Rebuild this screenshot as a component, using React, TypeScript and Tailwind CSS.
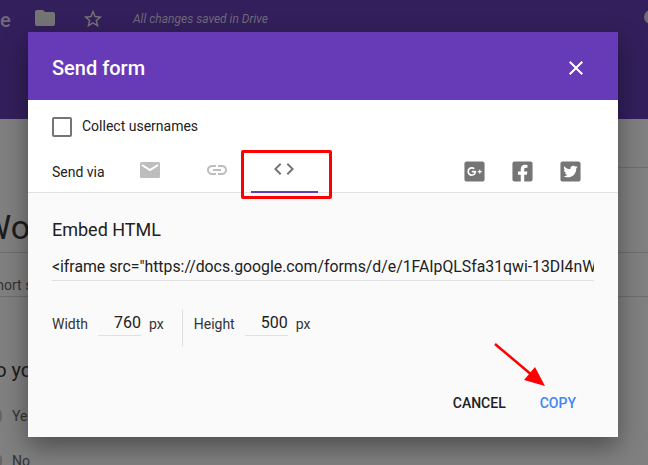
import { FaGooglePlusSquare, FaFacebookSquare, FaTwitterSquare } from 'react-icons/fa'

const socials = [FaGooglePlusSquare, FaFacebookSquare, FaTwitterSquare]

const Backdrop = () => (
  <div className="h-[465px] overflow-hidden bg-[#808080] text-[#1c1c1c]">
    <div className="flex h-[119px] items-start bg-[#331f5c] pt-[9px] text-[#6f6a78]">
      <span className="w-[35px] text-[20px] leading-[22px] font-medium">e</span>
      <svg viewBox="0 0 20 16" className="mt-[1px] h-4 w-5 fill-[#757575]">
        <path d="M2 0h6l2 2h8a2 2 0 0 1 2 2v10a2 2 0 0 1-2 2H2a2 2 0 0 1-2-2V2a2 2 0 0 1 2-2z" />
      </svg>
      <svg viewBox="0 0 24 24" className="-mt-[1px] ml-[27px] h-[22px] w-[22px] fill-[#757575]">
        <path d="M22 9.24l-7.19-.62L12 2 9.19 8.63 2 9.24l5.46 4.73L5.82 21 12 17.27 18.18 21l-1.63-7.03L22 9.24zM12 15.4l-3.76 2.27 1-4.28-3.32-2.88 4.38-.38L12 6.1l1.71 4.04 4.38.38-3.32 2.88 1 4.28L12 15.4z" />
      </svg>
      <span className="ml-[29px] text-[12px] leading-[20px] italic">All changes saved in Drive</span>
      <span className="ml-auto -mr-[10px] mt-[1px] h-[14px] w-[14px] rounded-full bg-[#6f6a78]" />
    </div>
    <div className="ml-[295px] mt-[48px] h-px bg-[#6e6e6e]" />
    <div className="-ml-[19px] mt-[39px] text-[34px] leading-[40px] whitespace-nowrap">Work</div>
    <div className="mt-[5px] h-px bg-[#6e6e6e]" />
    <div className="-ml-[12px] mt-[22px] text-[14px] leading-[20px] text-[#333]">Short s</div>
    <div className="mt-[1px] h-px bg-[#6e6e6e]" />
    <div className="-ml-[18px] mt-[59px] text-[20px] leading-[28px]">Do you</div>
    <div className="mt-[22px] flex items-center gap-[10px] text-[14px] leading-[20px] text-[#333]">
      <span className="-ml-[8px] h-[14px] w-[10px] rounded-full bg-[#666]" />
      Yes
    </div>
    <div className="mt-[25px] flex items-center gap-[10px] text-[14px] leading-[20px] text-[#333]">
      <span className="-ml-[8px] h-[14px] w-[10px] rounded-full bg-[#666]" />
      No
    </div>
  </div>
)

const SizeField = ({ label, value, labelWidth }: { label: string; value: string; labelWidth: string }) => (
  <div className="flex h-[26px] items-start">
    <span className={`${labelWidth} pt-[1px] text-[14px] leading-[26px] text-[#333]`}>{label}</span>
    <span className="h-[26px] w-[43px] border-b border-[#e0e0e0] text-right text-[16px] leading-[26px] text-[#212121]">
      {value}
    </span>
    <span className="ml-2 pt-[1px] text-[14px] leading-[26px] text-[#333]">px</span>
  </div>
)

export default function App() {
  return (
    <div className="relative h-[465px] w-[648px] overflow-hidden font-['Roboto',sans-serif]">
      <Backdrop />
      <div className="absolute top-[32px] left-[28px] flex h-[405px] w-[590px] flex-col bg-[#fafafa] shadow-[0_10px_24px_rgba(0,0,0,0.4)]">
        <div className="flex h-[68px] items-center justify-between bg-[#673ab7] pr-[30px] pl-[24px]">
          <span className="pt-[4px] text-[20px] font-medium text-white">Send form</span>
          <svg viewBox="0 0 24 24" className="mt-[4px] h-6 w-6 fill-white">
            <path d="M19 6.41L17.59 5 12 10.59 6.41 5 5 6.41 10.59 12 5 17.59 6.41 19 12 13.41 17.59 19 19 17.59 13.41 12z" />
          </svg>
        </div>

        <div className="h-[93px] border-b border-[#e0e0e0] bg-white px-[24px]">
          <div className="flex items-center pt-[16px]">
            <span className="h-[20px] w-[20px] rounded-[2px] border-2 border-[#757575]" />
            <span className="ml-[10px] text-[14px] text-[#212121]">Collect usernames</span>
          </div>
          <div className="mt-[14px] flex h-[42px] items-stretch">
            <span className="w-[65px] self-center pt-[1px] text-[14px] text-[#212121]">Send via</span>
            <div className="flex w-[67px] items-center justify-center pr-[2px] pb-[4px]">
              <svg viewBox="0 0 20 16" className="h-4 w-5">
                <rect width="20" height="16" rx="1.5" fill="#bdbdbd" />
                <path d="M2 3l8 5 8-5" fill="none" stroke="#fff" strokeWidth="2" />
              </svg>
            </div>
            <div className="flex w-[67px] items-center justify-center pr-[2px] pb-[4px]">
              <svg viewBox="0 0 24 24" className="h-6 w-6 fill-[#bdbdbd]">
                <path d="M3.9 12c0-1.71 1.39-3.1 3.1-3.1h4V7H7c-2.76 0-5 2.24-5 5s2.24 5 5 5h4v-1.9H7c-1.71 0-3.1-1.39-3.1-3.1zM8 13h8v-2H8v2zm9-6h-4v1.9h4c1.71 0 3.1 1.39 3.1 3.1s-1.39 3.1-3.1 3.1h-4V17h4c2.76 0 5-2.24 5-5s-2.24-5-5-5z" />
              </svg>
            </div>
            <div className="flex w-[67px] items-center justify-center border-b-2 border-[#673ab7] pr-[2px] pb-[4px]">
              <svg viewBox="0 0 24 24" className="h-6 w-6 fill-[#757575]">
                <path d="M9.4 16.6L4.8 12l4.6-4.6L8 6l-6 6 6 6 1.4-1.4zm5.2 0l4.6-4.6-4.6-4.6L16 6l6 6-6 6-1.4-1.4z" />
              </svg>
            </div>
            <div className="ml-auto flex items-center gap-[28px] pr-[14px] pb-[2px]">
              {socials.map((Icon, i) => (
                <span key={i} className="flex h-5 w-5 items-center justify-center">
                  <Icon className="h-[23px] w-[23px] shrink-0 text-[#757575]" />
                </span>
              ))}
            </div>
          </div>
        </div>

        <div className="flex flex-1 flex-col px-[24px]">
          <div className="mt-[24px] text-[18px] leading-[26px] text-[#212121]">Embed HTML</div>
          <div className="mt-[10px] h-[28px] w-[542px] overflow-hidden border-b border-[#e0e0e0] pt-[2px] text-[15.8px] leading-[24px] whitespace-nowrap text-[#212121]">
            {'<iframe src="https://docs.google.com/forms/d/e/1FAIpQLSfa31qwi-13DI4nWxyz/viewform?embedded=true"'}
          </div>
          <div className="mt-[29px] flex h-[36px] items-start">
            <SizeField label="Width" value="760" labelWidth="w-[46px]" />
            <span className="mr-[11px] ml-[18px] h-full w-px bg-[#e0e0e0]" />
            <SizeField label="Height" value="500" labelWidth="w-[51px]" />
          </div>
          <div className="mt-auto flex justify-end gap-[34px] pr-[18px] pb-[24px] text-[14px] leading-[20px] font-medium">
            <span className="text-[#212121]">CANCEL</span>
            <span className="text-[#4285f4]">COPY</span>
          </div>
        </div>
      </div>

      {/* annotations */}
      <div className="absolute top-[150px] left-[241px] h-[49px] w-[91px] rounded-[2px] border-[3px] border-[#ff0000]" />
      <svg className="absolute top-[340px] left-[490px] h-[50px] w-[60px]" viewBox="0 0 60 50">
        <path d="M5 4l38 32" stroke="#ff0000" strokeWidth="2.5" fill="none" />
        <path d="M55 46l-21-6 11-13z" fill="#ff0000" />
      </svg>
    </div>
  )
}
